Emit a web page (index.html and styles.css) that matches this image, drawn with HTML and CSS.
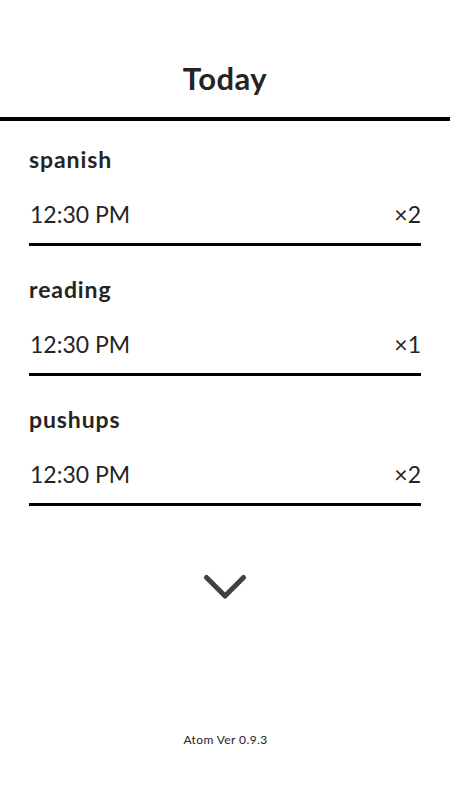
FILE: index.html
```html
<!DOCTYPE html>
<html>
<head>
<meta charset="utf-8">
<link rel="stylesheet" href="styles.css">
</head>
<body>
<header class="top">
  <h1 class="title">Today</h1>
</header>
<main class="list">
  <section class="item">
    <div class="name">spanish</div>
    <div class="row"><span class="time">12:30 PM</span><span class="count">×2</span></div>
  </section>
  <section class="item">
    <div class="name">reading</div>
    <div class="row"><span class="time">12:30 PM</span><span class="count">×1</span></div>
  </section>
  <section class="item">
    <div class="name">pushups</div>
    <div class="row"><span class="time">12:30 PM</span><span class="count">×2</span></div>
  </section>
</main>
<div class="more">
  <svg width="46" height="28" viewBox="0 0 46 28"><path d="M4.5 4.5 L23 23 L41.5 4.5" fill="none" stroke="#404040" stroke-width="5" stroke-linecap="round" stroke-linejoin="round"/></svg>
</div>
<footer class="ver">Atom Ver 0.9.3</footer>
</body>
</html>
```
FILE: styles.css
```css
html, body {
  margin: 0;
  padding: 0;
  background: #fff;
}
body {
  font-family: "Lato", "Open Sans", sans-serif;
  color: #242424;
  width: 450px;
}
.top {
  height: 117px;
  border-bottom: 4px solid #000;
  display: flex;
  justify-content: center;
}
.title {
  margin: 0;
  padding-top: 60px;
  font-size: 31px;
  font-weight: 700;
  line-height: 36px;
  letter-spacing: 0.5px;
}
.list {
  padding: 0 29px;
}
.item {
  border-bottom: 3px solid #000;
  padding-top: 29px;
  padding-bottom: 15px;
}
.item:first-child {
  padding-top: 24px;
}
.name {
  font-weight: 700;
  font-size: 23px;
  line-height: 28px;
  letter-spacing: 0.9px;
}
.row {
  display: flex;
  justify-content: space-between;
  padding-top: 27px;
  font-size: 23px;
  line-height: 28px;
  padding-left: 1px;
}
.more {
  display: flex;
  justify-content: center;
  padding-top: 67px;
}
.ver {
  text-align: center;
  font-size: 12px;
  letter-spacing: 0.4px;
  padding-top: 131px;
  padding-left: 1px;
}
```
